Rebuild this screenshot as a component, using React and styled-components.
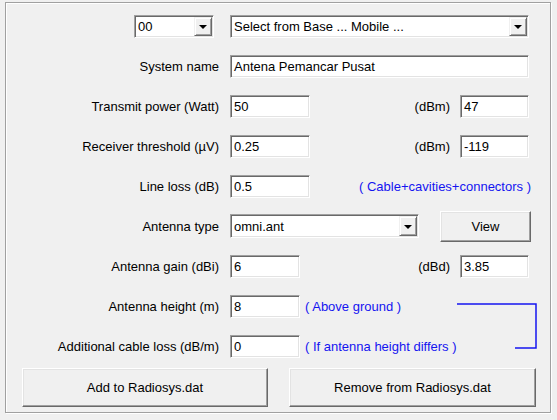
import React from 'react'
import styled, { createGlobalStyle } from 'styled-components'

const GlobalStyle = createGlobalStyle`
  html, body {
    margin: 0;
    padding: 0;
    background: #f0f0f0;
  }
  body {
    font-family: "Liberation Sans", Arial, sans-serif;
    font-size: 13px;
    color: #000;
  }
`

const Page = styled.div`
  width: 557px;
  height: 420px;
  padding-top: 2px;
  padding-left: 5px;
  box-sizing: border-box;
`

const Frame = styled.div`
  position: relative;
  width: 546px;
  height: 411px;
  box-sizing: border-box;
  border: 1px solid #a0a0a0;
  box-shadow: 1px 1px 0 #fff, inset 1px 1px 0 #fff;
  padding: 3px 21px 0 0;
`

const Row = styled.div`
  display: flex;
  align-items: center;
  height: 40px;
`

const Label = styled.div`
  width: 213px;
  margin-right: 11px;
  display: flex;
  justify-content: flex-end;
  align-items: center;
  padding-right: ${(p) => p.$pad || 0}px;
  box-sizing: border-box;
  white-space: nowrap;
`

const Field = styled.div`
  width: ${(p) => p.$w}px;
  height: ${(p) => p.$h || 23}px;
  flex: none;
  box-sizing: border-box;
  background: #fff;
  border: 1px solid;
  border-color: #a0a0a0 #fff #fff #a0a0a0;
  box-shadow: inset 1px 1px 0 #696969, inset -1px -1px 0 #e3e3e3;
  display: flex;
  align-items: center;
  padding: 1px 1px 1px 3px;
  white-space: nowrap;
  overflow: hidden;
`

const FieldText = styled.span`
  flex: 1;
  overflow: hidden;
`

const ArrowButton = styled.div`
  width: 18px;
  align-self: stretch;
  box-sizing: border-box;
  background: #f0f0f0;
  border: 1px solid;
  border-color: #f0f0f0 #696969 #696969 #f0f0f0;
  box-shadow: inset 1px 1px 0 #fff, inset -1px -1px 0 #a0a0a0;
  display: flex;
  align-items: center;
  justify-content: center;

  &::after {
    content: '';
    border-left: 4px solid transparent;
    border-right: 4px solid transparent;
    border-top: 4px solid #000;
    margin-top: 1px;
  }
`

const Unit = styled.span`
  margin-left: auto;
  margin-right: 10px;
`

const Note = styled.span`
  color: #1414f0;
  margin-left: ${(p) => (p.$auto ? 'auto' : '5px')};
  margin-right: ${(p) => (p.$auto ? '-2px' : 0)};
  white-space: nowrap;
`

const Button = styled.button`
  flex: none;
  font: inherit;
  color: #000;
  width: ${(p) => p.$w}px;
  height: ${(p) => p.$h}px;
  background: #f0f0f0;
  border: 1px solid;
  border-color: #fff #696969 #696969 #fff;
  box-shadow: inset -1px -1px 0 #a0a0a0, inset 1px 1px 0 #e3e3e3;
  padding: 0;
  cursor: pointer;
`

const ViewButton = styled(Button)`
  margin-left: auto;
  margin-right: -2px;
`

const ButtonRow = styled.div`
  display: flex;
  gap: 21px;
  margin-top: 2px;
  padding-left: 16px;
`

const Bracket = styled.svg`
  position: absolute;
  left: 451px;
  top: 300px;
  overflow: visible;
`

const Combo = ({ w, h, children }) => (
  <Field $w={w} $h={h}>
    <FieldText>{children}</FieldText>
    <ArrowButton />
  </Field>
)

export default function App() {
  return (
    <>
      <GlobalStyle />
      <Page>
        <Frame>
          <Row>
            <Label $pad={5}>
              <Combo w={80}>00</Combo>
            </Label>
            <Combo w={299}>Select from Base ... Mobile ...</Combo>
          </Row>
          <Row>
            <Label>System name</Label>
            <Field $w={299}>Antena Pemancar Pusat</Field>
          </Row>
          <Row>
            <Label>Transmit power (Watt)</Label>
            <Field $w={80}>50</Field>
            <Unit>(dBm)</Unit>
            <Field $w={69}>47</Field>
          </Row>
          <Row>
            <Label>Receiver threshold (µV)</Label>
            <Field $w={80}>0.25</Field>
            <Unit>(dBm)</Unit>
            <Field $w={69}>-119</Field>
          </Row>
          <Row>
            <Label>Line loss (dB)</Label>
            <Field $w={80}>0.5</Field>
            <Note $auto>( Cable+cavities+connectors )</Note>
          </Row>
          <Row>
            <Label>Antenna type</Label>
            <Combo w={189} h={24}>omni.ant</Combo>
            <ViewButton $w={91} $h={31}>View</ViewButton>
          </Row>
          <Row>
            <Label>Antenna gain (dBi)</Label>
            <Field $w={70}>6</Field>
            <Unit>(dBd)</Unit>
            <Field $w={69}>3.85</Field>
          </Row>
          <Row>
            <Label>Antenna height (m)</Label>
            <Field $w={70}>8</Field>
            <Note>( Above ground )</Note>
          </Row>
          <Row>
            <Label>Additional cable loss (dB/m)</Label>
            <Field $w={70}>0</Field>
            <Note>( If antenna height differs )</Note>
          </Row>
          <ButtonRow>
            <Button $w={246} $h={39}>Add to Radiosys.dat</Button>
            <Button $w={247} $h={39}>Remove from Radiosys.dat</Button>
          </ButtonRow>
          <Bracket width="82" height="48" viewBox="0 0 82 48">
            <path d="M0 1 H79 V45 H58" fill="none" stroke="#1414f0" strokeWidth="1.5" />
          </Bracket>
        </Frame>
      </Page>
    </>
  )
}
